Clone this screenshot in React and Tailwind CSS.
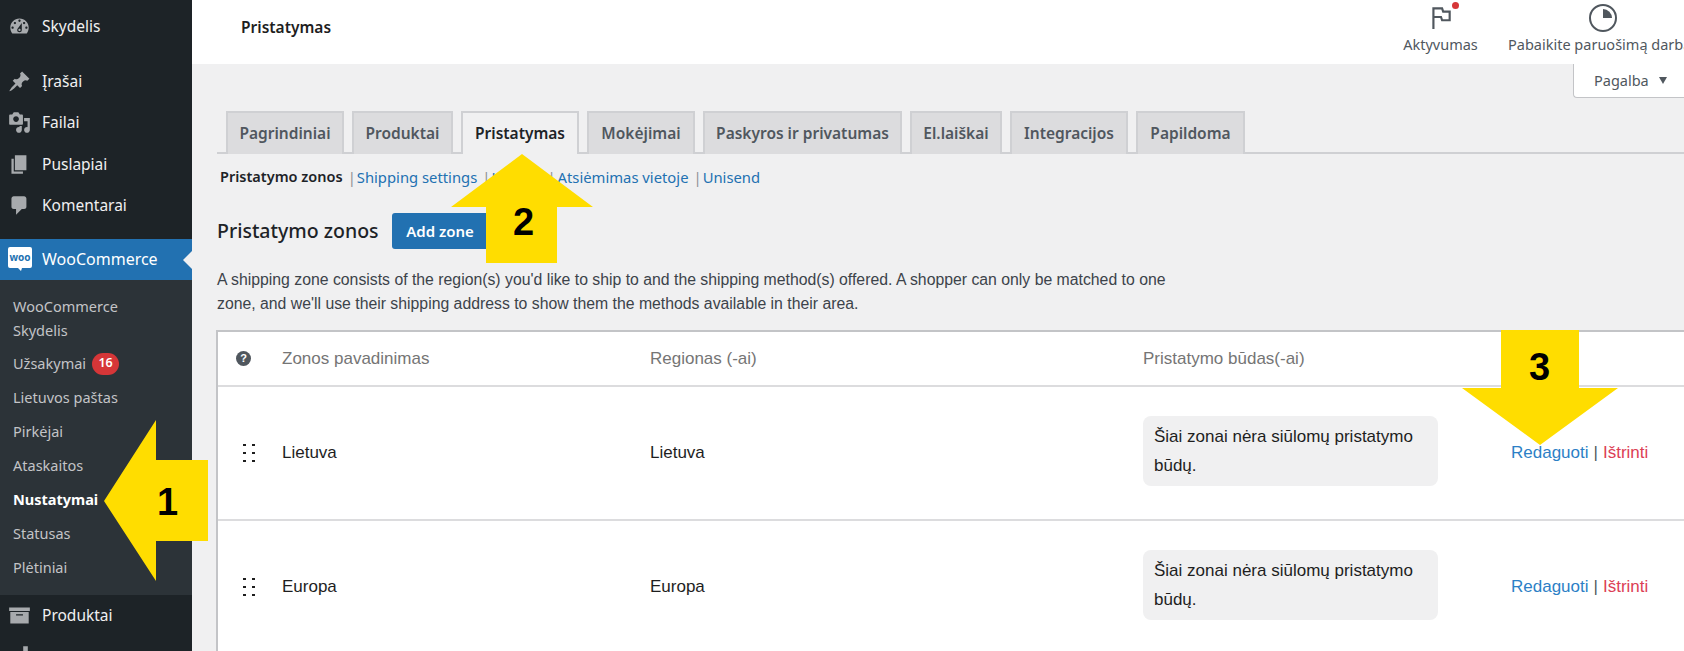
import React from 'react'

const sans = "font-['Noto_Sans',sans-serif]"

const icons = {
    dash: 'M3.76 16h12.48c1.1-1.37 1.76-3.11 1.76-5 0-4.42-3.58-8-8-8s-8 3.58-8 8c0 1.89.66 3.63 1.76 5zM10 4c.55 0 1 .45 1 1s-.45 1-1 1-1-.45-1-1 .45-1 1-1zM6 6c.55 0 1 .45 1 1s-.45 1-1 1-1-.45-1-1 .45-1 1-1zm8 0c.55 0 1 .45 1 1s-.45 1-1 1-1-.45-1-1 .45-1 1-1zm-5.37 5.55L12 7v6c0 1.1-.9 2-2 2s-2-.9-2-2c0-.57.24-1.08.63-1.45zM4 10c.55 0 1 .45 1 1s-.45 1-1 1-1-.45-1-1 .45-1 1-1zm12 0c.55 0 1 .45 1 1s-.45 1-1 1-1-.45-1-1 .45-1 1-1zm-5 3c0-.55-.45-1-1-1s-1 .45-1 1 .45 1 1 1 1-.45 1-1z',
    pin: 'M10.44 3.02l1.82-1.82 6.36 6.35-1.83 1.82c-1.05-.68-2.48-.57-3.41.36l-.75.75c-.92.93-1.04 2.35-.35 3.41l-1.83 1.82-2.41-2.41-2.8 2.79c-.42.42-3.38 2.71-3.8 2.29s1.86-3.39 2.28-3.81l2.79-2.79L4.1 9.36l1.83-1.82c1.05.69 2.48.57 3.4-.36l.75-.75c.93-.92 1.05-2.35.36-3.41z',
    media: 'M13 11V4c0-.55-.45-1-1-1h-1.67L9 1H5L3.67 3H2c-.55 0-1 .45-1 1v7c0 .55.45 1 1 1h10c.55 0 1-.45 1-1zM7 4.5c1.38 0 2.5 1.12 2.5 2.5S8.38 9.5 7 9.5 4.5 8.38 4.5 7 5.62 4.5 7 4.5zM14 6h5v10.5c0 1.38-1.12 2.5-2.5 2.5S14 17.88 14 16.5s1.12-2.5 2.5-2.5c.17 0 .34.02.5.05V9h-3V6zm-4 8.05V13h2v3.5c0 1.38-1.12 2.5-2.5 2.5S7 17.88 7 16.5 8.12 14 9.5 14c.17 0 .34.02.5.05z',
    page: 'M6 15V2h10v13H6zm-1 1h8v2H3V5h2v11z',
    comment: 'M5 2h9c1.1 0 2 .9 2 2v7c0 1.1-.9 2-2 2h-2l-5 5v-5H5c-1.1 0-2-.9-2-2V4c0-1.1.9-2 2-2z',
    archive: 'M19 3v3H1V3h18zM2 7h16v10H2V7zm11 3V9H7v1h6z',
    chart: 'M18 18V6h-4v12h4zm-6 0V1H8v17h4zm-6 0v-8H2v8h4z',
}

function MenuIcon({ name }) {
    return (
        <svg viewBox="0 0 20 20" className="h-[23px] w-[23px] shrink-0 fill-[#a7aaad]">
            <path fillRule="evenodd" d={icons[name]} />
        </svg>
    )
}

function MenuItem({ icon, label }) {
    return (
        <div className="flex h-[41.5px] shrink-0 items-center gap-[11px] pl-[8px] text-[15.5px] text-[#f0f0f1]">
            <MenuIcon name={icon} />
            <span>{label}</span>
        </div>
    )
}

function SubItem({ children, active }) {
    return (
        <div className={`flex h-[34.1px] items-center gap-[6px] pl-[13px] text-[14.5px] ${active ? 'font-bold text-white' : 'text-[#c3c4c7]'}`}>
            {children}
        </div>
    )
}

function Sidebar() {
    return (
        <aside className={`flex h-full w-[192px] shrink-0 flex-col bg-[#1d2327] pt-[6px] ${sans}`}>
            <MenuItem icon="dash" label="Skydelis" />
            <div className="h-[13px] shrink-0" />
            <MenuItem icon="pin" label="Įrašai" />
            <MenuItem icon="media" label="Failai" />
            <MenuItem icon="page" label="Puslapiai" />
            <MenuItem icon="comment" label="Komentarai" />
            <div className="h-[12px] shrink-0" />
            <div className="relative flex h-[41px] shrink-0 items-center gap-[9px] bg-[#2271b1] pl-[7px] text-[16px] text-white">
                <svg viewBox="0 0 26 26" className="h-[26px] w-[26px] shrink-0">
                    <path d="M3 1h20a2 2 0 0 1 2 2v17a2 2 0 0 1-2 2h-8l-1 3-3-3H3a2 2 0 0 1-2-2V3a2 2 0 0 1 2-2z" fill="#fff" />
                    <text x="13" y="15" textAnchor="middle" fontSize="10" fontWeight="700" fill="#2271b1">woo</text>
                </svg>
                <span>WooCommerce</span>
                <div className="absolute right-0 top-[12px] h-0 w-0 border-y-[9px] border-r-[9px] border-y-transparent border-r-[#f0f0f1]" />
            </div>
            <div className="h-[315px] shrink-0 bg-[#2c3338] pt-[14px]">
                <div className="pb-[5px] pl-[13px] text-[14.5px] leading-[24px] text-[#c3c4c7]">WooCommerce<br />Skydelis</div>
                <SubItem>
                    Užsakymai
                    <span className="flex h-[22px] w-[27px] items-center justify-center rounded-full bg-[#d63638] text-[12.5px] font-semibold text-white">16</span>
                </SubItem>
                <SubItem>Lietuvos paštas</SubItem>
                <SubItem>Pirkėjai</SubItem>
                <SubItem>Ataskaitos</SubItem>
                <SubItem active>Nustatymai</SubItem>
                <SubItem>Statusas</SubItem>
                <SubItem>Plėtiniai</SubItem>
            </div>
            <MenuItem icon="archive" label="Produktai" />
            <div className="flex h-[41.5px] shrink-0 items-center pl-[14px]">
                <MenuIcon name="chart" />
            </div>
        </aside>
    )
}

function Header() {
    return (
        <header className="flex h-[64px] shrink-0 items-start justify-between bg-white pl-[49px]">
            <h1 className="mt-[17px] text-[15.5px] font-semibold leading-[20px] text-[#1e1e1e]">Pristatymas</h1>
            <div className="flex text-[14.5px] leading-[20px] text-[#50575e]">
                <div className="flex w-[75px] flex-col items-center">
                    <div className="relative h-[34px]">
                        <svg viewBox="0 0 24 24" className="mt-[4px] h-[26px] w-[26px] fill-none stroke-[#50575e] stroke-2">
                            <path d="M5 23V4h8l1 3h6v8h-7l-1-3H5" />
                        </svg>
                        <div className="absolute right-[-5px] top-[2px] h-[7px] w-[7px] rounded-full bg-[#d63638]" />
                    </div>
                    <span>Aktyvumas</span>
                </div>
                <div className="ml-[30px] flex w-[176px] flex-col items-start overflow-hidden">
                    <svg viewBox="0 0 28 28" className="ml-[81px] mt-[4px] h-[28px] w-[28px] fill-none stroke-[#50575e] stroke-2">
                        <circle cx="14" cy="14" r="13" />
                        <path d="M14 5a9 9 0 0 1 9 9h-9z" className="fill-[#50575e] stroke-none" />
                    </svg>
                    <span className="mt-[2px] whitespace-nowrap">Pabaikite paruošimą darbą</span>
                </div>
            </div>
        </header>
    )
}

const tabs = [
    ['Pagrindiniai', 'w-[118px]'],
    ['Produktai', 'w-[101px]'],
    ['Pristatymas', 'w-[118px]'],
    ['Mokėjimai', 'w-[108px]'],
    ['Paskyros ir privatumas', 'w-[199px]'],
    ['El.laiškai', 'w-[92px]'],
    ['Integracijos', 'w-[118px]'],
    ['Papildoma', 'w-[109px]'],
]

function Tabs() {
    return (
        <div className="mt-[47px] flex h-[43px] shrink-0 gap-[8px] border-b-2 border-[#cfd0d3] pl-[9px]">
            {tabs.map(([label, width]) => {
                const active = label === 'Pristatymas'
                return (
                    <div
                        key={label}
                        className={`flex h-[43px] items-center justify-center border-2 border-b-0 border-[#cfd0d3] text-[15.5px] font-semibold ${width} ${active ? 'bg-[#f0f0f1] text-[#1d2327]' : 'bg-[#dcdcde] text-[#50575e]'}`}
                    >
                        {label}
                    </div>
                )
            })}
        </div>
    )
}

function SubNav() {
    return (
        <div className="ml-[3px] mt-[13px] flex h-[20px] items-center text-[14.8px] text-[#2271b1]">
            <span className="text-[14.5px] font-semibold text-[#1d2327]">Pristatymo zonos</span>
            <span className="ml-[5px] mr-[1px] text-[#8c8f94]">|</span>
            <span>Shipping settings</span>
            <span className="ml-[5px] mr-[1px] text-[#8c8f94]">|</span>
            <span className="w-[56px]">Klasės</span>
            <span className="mr-[2px] text-[#8c8f94]">|</span>
            <span>Atsiėmimas vietoje</span>
            <span className="ml-[5px] mr-[1px] text-[#8c8f94]">|</span>
            <span>Unisend</span>
        </div>
    )
}

function Row({ name }) {
    return (
        <div className="grid h-[134px] grid-cols-[64px_368px_493px_368px_1fr] items-center border-t-2 border-[#dcdcde] text-[17px] text-[#1e1e1e]">
            <div className="ml-[25px] grid w-[12px] grid-cols-2 gap-x-[6.5px] gap-y-[5.5px]">
                {[0, 1, 2, 3, 4, 5].map((i) => <div key={i} className="h-[2.5px] w-[2.5px] bg-[#1e1e1e]" />)}
            </div>
            <span>{name}</span>
            <span>{name}</span>
            <div className="mb-[4px] w-[295px] rounded-[8px] bg-[#f0f0f1] px-[11px] py-[6px] leading-[29px]">
                Šiai zonai nėra siūlomų pristatymo būdų.
            </div>
            <div className="whitespace-nowrap">
                <span className="text-[#2c7fc6]">Redaguoti</span>
                <span className="mx-[5px] text-[#50575e]">|</span>
                <span className="text-[#dc4055]">Ištrinti</span>
            </div>
        </div>
    )
}

function ZonesTable() {
    return (
        <div className="-ml-[1px] mt-[14px] flex-1 border-l-2 border-t-2 border-[#c3c4c7] bg-white font-['Liberation_Sans',sans-serif]">
            <div className="grid h-[53px] grid-cols-[64px_368px_493px_368px_1fr] items-center text-[17px] text-[#757575]">
                <div className="ml-[18px] flex h-[15px] w-[15px] items-center justify-center rounded-full bg-[#50575e] text-[11px] font-bold text-white">?</div>
                <span>Zonos pavadinimas</span>
                <span>Regionas (-ai)</span>
                <span>Pristatymo būdas(-ai)</span>
            </div>
            <Row name="Lietuva" />
            <Row name="Europa" />
        </div>
    )
}

function Arrow({ box, points, digit, digitClass }) {
    return (
        <>
            <svg className={`absolute ${box}`} viewBox={points.view}>
                <polygon points={points.shape} fill="#ffdd00" />
            </svg>
            <span className={`absolute font-['Liberation_Sans',sans-serif] text-[38px] font-bold leading-none text-black ${digitClass}`}>{digit}</span>
        </>
    )
}

export default function App() {
    return (
        <div className="relative flex h-[651px] w-[1684px] overflow-hidden bg-[#f0f0f1]">
            <Sidebar />
            <div className={`flex min-w-0 flex-1 flex-col ${sans}`}>
                <Header />
                <div className="absolute right-0 top-[64px] flex h-[34px] w-[111px] items-center gap-[10px] rounded-bl-[4px] border-b border-l border-[#c3c4c7] bg-white pl-[20px] text-[14.5px] text-[#50575e]">
                    Pagalba
                    <div className="h-0 w-0 border-x-[4.5px] border-t-[7px] border-x-transparent border-t-[#50575e]" />
                </div>
                <div className="flex flex-1 flex-col pl-[25px]">
                    <Tabs />
                    <SubNav />
                    <div className="mt-[26px] flex h-[36px] items-center gap-[13px]">
                        <h2 className="text-[19.5px] font-medium text-[#1d2327]">Pristatymo zonos</h2>
                        <div className="flex h-[36px] w-[97px] items-center justify-center rounded-[3px] bg-[#2271b1] text-[15px] font-semibold text-white">Add zone</div>
                    </div>
                    <p className="mt-[19px] w-[960px] text-[15.8px] leading-[24px] text-[#3c434a] font-['Liberation_Sans',sans-serif]">
                        A shipping zone consists of the region(s) you'd like to ship to and the shipping method(s) offered. A shopper can only be matched to one zone, and we'll use their shipping address to show them the methods available in their area.
                    </p>
                    <ZonesTable />
                </div>
            </div>
            <Arrow
                box="left-[104px] top-[420px] h-[161px] w-[104px]"
                points={{ view: '0 0 104 161', shape: '0,81 52,0 52,40 104,40 104,121 52,121 52,161' }}
                digit="1"
                digitClass="left-[157px] top-[483px]"
            />
            <Arrow
                box="left-[451px] top-[154px] h-[109px] w-[142px]"
                points={{ view: '0 0 142 109', shape: '71,0 142,53 106,53 106,109 35,109 35,53 0,53' }}
                digit="2"
                digitClass="left-[513px] top-[203px]"
            />
            <Arrow
                box="left-[1462px] top-[330px] h-[115px] w-[156px]"
                points={{ view: '0 0 156 115', shape: '39,0 117,0 117,58 156,58 78,115 0,58 39,58' }}
                digit="3"
                digitClass="left-[1529px] top-[348px]"
            />
        </div>
    )
}
